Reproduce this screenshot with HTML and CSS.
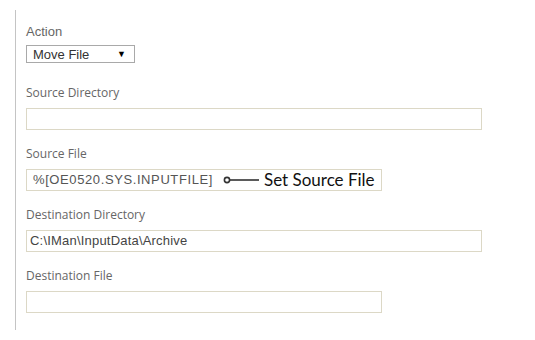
FILE: index.html
```html
<!DOCTYPE html>
<html lang="en">
<head>
  <meta charset="UTF-8" />
  <title>Move File</title>
  <link rel="stylesheet" href="styles.css">
</head>
<body>

  <div class="panel">
    <!-- Action -->
    <div class="field field-action">
      <label class="label label-arial">Action</label>
      <div class="select">
        <span>Move File</span>
        <span class="arrow">&#9660;</span>
      </div>
    </div>

    <div class="field">
      <label class="label">Source Directory</label>
      <div class="input wide"></div>
    </div>

    <!-- Source file with the hint -->
    <div class="field">
      <label class="label">Source File</label>
      <div class="input narrow source-file">
        <span class="var">%[OE0520.SYS.INPUTFILE]</span>
        <span class="hint">
          <svg width="36" height="8" viewBox="0 0 36 8">
            <circle cx="4" cy="4" r="2.6" fill="none" stroke="#333" stroke-width="1.6"/>
            <line x1="6.6" y1="4" x2="36" y2="4" stroke="#333" stroke-width="1.6"/>
          </svg>
          <span class="hint-text">Set Source File</span>
        </span>
      </div>
    </div>

    <div class="field">
      <label class="label">Destination Directory</label>
      <div class="input wide dest">C:\IMan\InputData\Archive</div>
    </div>

    <div class="field last">
      <label class="label">Destination File</label>
      <div class="input narrow"></div>
    </div>
  </div>

</body>
</html>
```

FILE: styles.css
```css
body {
  margin: 0;
  padding: 0;
  background: #fff;
  font-family: 'Open Sans', sans-serif;
}

.panel {
  margin: 10px 0 0 15px;
  padding: 14px 0 17px 10px;
  border-left: 1px solid #c4c4c4;
  width: 470px;
}

.field {
  margin-bottom: 16px;
}

.field-action {
  margin-bottom: 22px;
}

.field.last {
  margin-bottom: 0;
}

.label {
  display: block;
  font-size: 12px;
  line-height: 16px;
  color: #666;
  margin-bottom: 7px;
}

.label-arial {
  font-family: 'Liberation Sans', Arial, sans-serif;
  font-size: 13px;
  margin-bottom: 5px;
}

.select {
  width: 109px;
  height: 18px;
  box-sizing: border-box;
  border: 1px solid #a9a9a9;
  display: flex;
  align-items: center;
  justify-content: space-between;
  padding: 0 8px 0 6px;
  font-family: 'Liberation Sans', Arial, sans-serif;
  font-size: 13px;
  color: #333;
}

.arrow {
  font-size: 9px;
  color: #000;
}

.input {
  height: 22px;
  box-sizing: border-box;
  border: 1px solid #dcd8c6;
  font-family: 'Liberation Sans', Arial, sans-serif;
  font-size: 12px;
  color: #333;
  line-height: 20px;
  padding-left: 3px;
}

.dest {
  font-size: 13px;
  letter-spacing: 0.2px;
  color: #444;
}

.wide {
  width: 456px;
}

.narrow {
  width: 356px;
}

.source-file {
  display: flex;
  align-items: center;
  padding-left: 6px;
}

.var {
  font-size: 13px;
  color: #555;
  letter-spacing: 0.6px;
}

.hint {
  display: flex;
  align-items: center;
  margin-left: 10px;
}

.hint svg {
  margin-right: 5px;
}

.hint-text {
  font-family: 'Lato', sans-serif;
  font-size: 17px;
  color: #111;
}
```
